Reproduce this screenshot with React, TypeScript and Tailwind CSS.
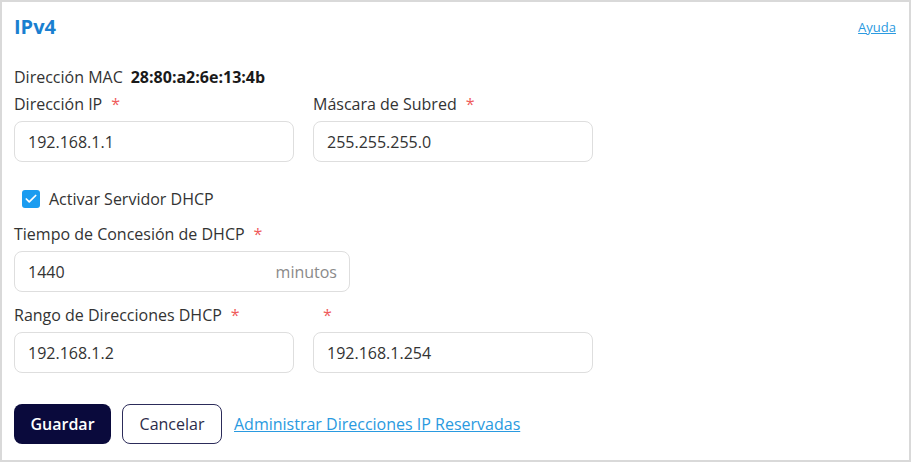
import { Check } from 'lucide-react';

// IPv4 settings panel

function Label({ text, required = true }: { text: string; required?: boolean }) {
  return (
    <div className="h-[20px] leading-[20px] text-[16px] text-[#333333]">
      {text}
      {required && <span className="ml-[9px] text-[#ef5b5b]">*</span>}
    </div>
  );
}

function Field({ value, width, suffix }: { value: string; width: string; suffix?: string }) {
  return (
    <div
      className={`mt-[7px] flex h-[41px] items-center justify-between rounded-[8px] border border-[#dedede] bg-white pl-[13px] pr-[12px] text-[16px] text-[#333333] ${width}`}
    >
      <span>{value}</span>
      {suffix && <span className="text-[#8a8a8a]">{suffix}</span>}
    </div>
  );
}

export default function App() {
  return (
    <div className="h-[463px] w-[913px] bg-white" style={{ fontFamily: '"Open Sans", "Noto Sans", sans-serif' }}>
      <div className="h-[462px] w-[911px] border-2 border-[#d9d9d9] px-[12px] pt-[11px]">
        {/* Header */}
        <div className="flex h-[28px] items-center justify-between">
          <h1 className="text-[20px] font-bold text-[#1a7fd0]">IPv4</h1>
          <a href="#" className="mr-[1px] mt-[2px] text-[13px] text-[#2a9ae0] underline">
            Ayuda
          </a>
        </div>

        {/* MAC */}
        <div className="mt-[26px] flex h-[20px] items-center text-[16px] text-[#333333]">
          <span>Dirección MAC</span>
          <span className="ml-[8px] text-[16px] font-bold text-[#1a1a1a]">28:80:a2:6e:13:4b</span>
        </div>

        {/* IP / Mask */}
        <div className="mt-[7px] flex gap-[19px]">
          <div>
            <Label text="Dirección IP" />
            <Field value="192.168.1.1" width="w-[280px]" />
          </div>
          <div>
            <Label text="Máscara de Subred" />
            <Field value="255.255.255.0" width="w-[280px]" />
          </div>
        </div>

        {/* DHCP toggle */}
        <label className="ml-[8px] mt-[27px] flex h-[20px] items-center gap-[9px] text-[16px] text-[#333333]">
          <span className="flex h-[18px] w-[18px] items-center justify-center rounded-[3px] bg-[#1b9cf0]">
            <Check size={14} strokeWidth={3} className="text-white" />
          </span>
          Activar Servidor DHCP
        </label>

        {/* Lease time */}
        <div className="mt-[15px]">
          <Label text="Tiempo de Concesión de DHCP" />
          <Field value="1440" width="w-[336px]" suffix="minutos" />
        </div>

        {/* Range */}
        <div className="mt-[13px] flex gap-[19px]">
          <div>
            <Label text="Rango de Direcciones DHCP" />
            <Field value="192.168.1.2" width="w-[280px]" />
          </div>
          <div>
            <div className="h-[20px] pl-[10px] leading-[20px] text-[16px] text-[#ef5b5b]">*</div>
            <Field value="192.168.1.254" width="w-[280px]" />
          </div>
        </div>

        {/* Actions */}
        <div className="mt-[31px] flex items-center">
          <button className="h-[40px] w-[97px] rounded-[8px] bg-[#0a0a3c] text-[16px] font-semibold text-white">
            Guardar
          </button>
          <button className="ml-[11px] h-[40px] w-[100px] rounded-[8px] border border-[#2c2c5a] bg-white text-[16px] text-[#2c2c4a]">
            Cancelar
          </button>
          <a href="#" className="ml-[12px] text-[16px] text-[#2a9ae0] underline">
            Administrar Direcciones IP Reservadas
          </a>
        </div>
      </div>
    </div>
  );
}
